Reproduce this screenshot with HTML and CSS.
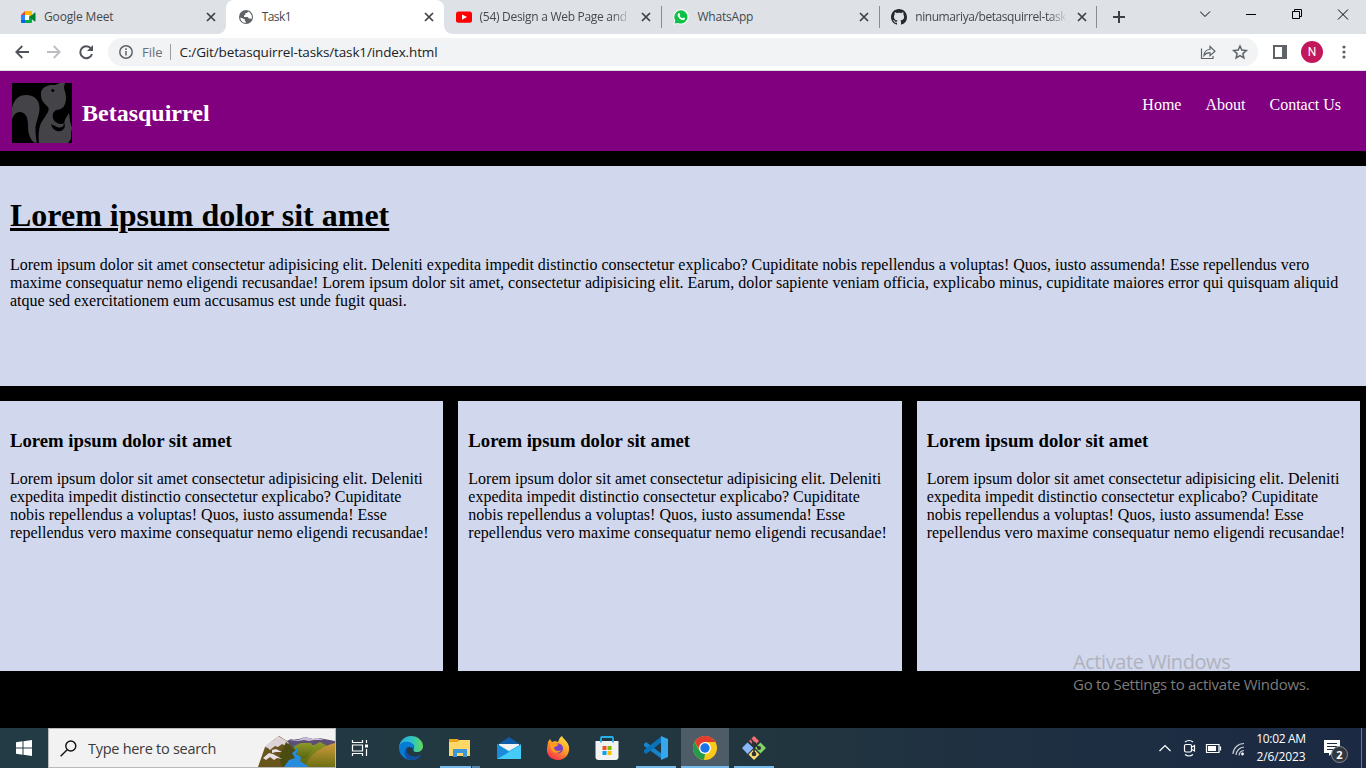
FILE: index.html
```html
<!DOCTYPE html>
<html lang="en">
<head>
<meta charset="utf-8">
<title>Task1</title>
<link rel="stylesheet" href="styles.css">
</head>
<body>
<svg class="defs" width="0" height="0">
  <symbol id="close" viewBox="0 0 10 10"><path d="M1 1l8 8M9 1L1 9" stroke="#3c4043" stroke-width="1.7" fill="none"/></symbol>
</svg>
<div class="screen">
  <div class="tabstrip">
    <div class="tab">
      <svg class="fav" viewBox="0 0 16 16"><path d="M1 6l4-4v4z" fill="#ea4335"/><path d="M5 2h6a1 1 0 0 1 1 1v3L9 8V6H5z" fill="#fbbc04"/><path d="M1 6h4v5H1z" fill="#2684fc"/><path d="M1 11h4v3H2a1 1 0 0 1-1-1z" fill="#0066da"/><path d="M5 6h4v5H5z" fill="#fff"/><path d="M5 11h4V8l3-2v7a1 1 0 0 1-1 1H5z" fill="#00ac47"/><path d="M12 6l2.500-2.300c.4-.3 1-.1 1 .4v7.800c0 .5-.6.7-1 .4L9 8z" fill="#00832d"/></svg>
      <span class="name meet">Google Meet</span><svg class="x"><use href="#close"/></svg>
    </div>
    <div class="tab active">
      <svg class="fav" viewBox="0 0 16 16"><circle cx="8" cy="8" r="7" fill="#5f6368"/><path d="M2.300 8.500l4.400 1.800v1.500l1 .8v1.300C4.600 13.900 2.300 11.500 2.300 8.500zM10 2.600L9.200 4H7.400v1.700L6 6.600v1.300h3.800l1 1.600h1.700l1 .8A5.800 5.800 0 0 0 10 2.600z" fill="#fff"/></svg>
      <span class="name task">Task1</span><svg class="x"><use href="#close"/></svg>
    </div>
    <div class="tab">
      <svg class="fav" viewBox="0 0 16 16"><rect y="2.500" width="16" height="11.300" rx="2.500" fill="#f00"/><path d="M6 5.500l5 2.600-5 2.600z" fill="#fff"/></svg>
      <span class="name tube fade">(54) Design a Web Page and U</span><svg class="x"><use href="#close"/></svg>
    </div>
    <div class="tab sep">
      <svg class="fav" viewBox="0 0 16 16"><path d="M.3 15.700L1.400 11.500A7.600 7.600 0 1 1 4.700 14.700z" fill="#fff"/><path d="M1.500 14.600L2.300 11.500A6.600 6.600 0 1 1 5 13.900z" fill="#0cc143"/><path d="M5.500 4.300c.5-.5 1-.3 1.200.2l.5 1.200c.1.400-.6.900-.6 1.100.5 1.300 1.400 2 2.600 2.500.4.100.7-.9 1.100-.9l1.500.7c.5.300 0 2-1.600 2.100C7.700 11.300 4.600 8.200 4.600 6c0-.7.300-1.300.9-1.700z" fill="#fff"/></svg>
      <span class="name wa">WhatsApp</span><svg class="x"><use href="#close"/></svg>
    </div>
    <div class="tab sep last">
      <svg class="fav" viewBox="0 0 16 16"><path fill="#24292f" d="M8 0C3.580 0 0 3.580 0 8c0 3.540 2.290 6.530 5.470 7.590.4.070.55-.17.55-.38 0-.19-.01-.82-.01-1.490-2.010.37-2.530-.49-2.690-.94-.09-.23-.48-.94-.82-1.130-.28-.15-.68-.52-.01-.53.63-.01 1.080.58 1.230.82.72 1.210 1.870.87 2.330.66.070-.52.28-.87.51-1.070-1.780-.2-3.640-.89-3.640-3.950 0-.87.31-1.590.82-2.150-.08-.2-.36-1.020.08-2.120 0 0 .67-.21 2.200.82.64-.18 1.320-.27 2-.27s1.360.09 2 .27c1.530-1.040 2.200-.82 2.200-.82.44 1.100.16 1.920.08 2.120.51.56.82 1.270.82 2.150 0 3.070-1.870 3.750-3.650 3.950.29.25.54.73.54 1.480 0 1.070-.01 1.930-.01 2.200 0 .21.15.46.55.38A8.010 8.010 0 0 0 16 8c0-4.420-3.580-8-8-8z"/></svg>
      <span class="name hub fade">ninumariya/betasquirrel-task</span><svg class="x"><use href="#close"/></svg>
    </div>
    <svg class="plus" viewBox="0 0 12 12"><path d="M6 0v12M0 6h12" stroke="#3c4043" stroke-width="2"/></svg>
    <svg class="winctl" width="166" height="34" viewBox="1200 0 166 34" fill="none" stroke="#000"><path d="M1200 11.500l5 5 5-5M1246 14.500h10M1292.500 11.500h7v7h-7zM1294.500 11V9.500h7v7H1300M1338 9.500l10 10M1348 9.500l-10 10"/></svg>
  </div>
  <div class="toolbar">
    <svg class="navicons" width="96" height="36" viewBox="0 34 96 36" fill="none" stroke-width="1.800"><path d="M29 52H16.500M22.300 46l-6 6 6 6" stroke="#50545a"/><path d="M47 52h12.500M53.700 46l6 6-6 6" stroke="#bbbdc0"/><path d="M91 48.500A6 6 0 1 0 92 54" stroke="#50545a" stroke-width="2"/><path d="M93 45v6h-6z" fill="#50545a"/></svg>
    <div class="omnibox">
      <svg width="16" height="16" viewBox="0 0 16 16" fill="none" stroke="#5f6368" stroke-width="1.500"><circle cx="8" cy="8" r="6.200"/><path d="M8 7v4.500M8 4.300v1.600"/></svg>
      <span class="scheme">File</span><i class="bar"></i><span class="url">C:/Git/betasquirrel-tasks/task1/index.html</span>
      <svg class="boxicons" width="50" height="18" viewBox="1200 43 50 18" fill="none" stroke="#5f6368"><path d="M1201.500 48.500v10h11.500V56M1204 55.500c.4-4.400 2.500-6 6-6v-3l5 4.700-5 4.500v-3c-3 0-4.500.8-6 2.800z" stroke-width="1.200"/><path d="M1240 46l1.800 4.100 4.500.5-3.400 3 1 4.400-3.900-2.300-3.900 2.300 1-4.400-3.400-3 4.500-.5z" stroke-width="1.500"/></svg>
    </div>
    <svg class="sidepanel" width="14" height="14" viewBox="0 0 14 14"><path fill="#5f6368" fill-rule="evenodd" d="M0 0h14v14H0zM2 2v10h7V2z"/></svg>
    <span class="avatar">N</span>
    <svg class="dots" width="4" height="14" viewBox="0 0 4 14" fill="#5f6368"><circle cx="2" cy="2" r="1.600"/><circle cx="2" cy="7" r="1.600"/><circle cx="2" cy="12" r="1.600"/></svg>
  </div>

  <main class="page">
    <header class="site">
      <svg class="logo" viewBox="0 0 60 60"><rect width="60" height="60" fill="#000"/><path d="M0 37V25C2 16 7 12 14 12c9 0 14 6 13.500 14C27 35 23 40 23.500 47c0 5 .5 9 1.500 12.500h-3C17 55 16 49 16 42c0-8-3-13-8-13-4 0-7 3-8 8z" fill="#444348"/><path d="M29 9C31 4 35 2 40 2h3l5-2h5l-1 4c0 3 2 6 2 11 0 7-3 12-10 12-3 2-4 5-3 8 1 4 5 6 9 6l1-1 1 2c-2 3-5 3-7 2l-6-3c1 4 3 6 6 7 4 1 7-1 8-5-2-5 1-8 4-13l1 8 2 7-1 6c1 4-1 7-3 9H27c-1-8 0-15 2-20l7-11c1-3 1-4-1-6-4-3-6-7-6-10z" fill="#444348"/><circle cx="40.800" cy="7.500" r="1.500"/></svg>
      <h2>Betasquirrel</h2>
      <nav><a>Home</a><a>About</a><a>Contact Us</a></nav>
    </header>
    <section class="hero">
      <h1>Lorem ipsum dolor sit amet</h1>
      <p>Lorem ipsum dolor sit amet consectetur adipisicing elit. Deleniti expedita impedit distinctio consectetur explicabo? Cupiditate nobis repellendus a voluptas! Quos, iusto assumenda! Esse repellendus vero<br>maxime consequatur nemo eligendi recusandae! Lorem ipsum dolor sit amet, consectetur adipisicing elit. Earum, dolor sapiente veniam officia, explicabo minus, cupiditate maiores error qui quisquam aliquid<br>atque sed exercitationem eum accusamus est unde fugit quasi.</p>
    </section>
    <div class="cards">
      <article><h3>Lorem ipsum dolor sit amet</h3><p>Lorem ipsum dolor sit amet consectetur adipisicing elit. Deleniti<br>expedita impedit distinctio consectetur explicabo? Cupiditate<br>nobis repellendus a voluptas! Quos, iusto assumenda! Esse<br>repellendus vero maxime consequatur nemo eligendi recusandae!</p></article>
      <article><h3>Lorem ipsum dolor sit amet</h3><p>Lorem ipsum dolor sit amet consectetur adipisicing elit. Deleniti<br>expedita impedit distinctio consectetur explicabo? Cupiditate<br>nobis repellendus a voluptas! Quos, iusto assumenda! Esse<br>repellendus vero maxime consequatur nemo eligendi recusandae!</p></article>
      <article><h3>Lorem ipsum dolor sit amet</h3><p>Lorem ipsum dolor sit amet consectetur adipisicing elit. Deleniti<br>expedita impedit distinctio consectetur explicabo? Cupiditate<br>nobis repellendus a voluptas! Quos, iusto assumenda! Esse<br>repellendus vero maxime consequatur nemo eligendi recusandae!</p></article>
    </div>
  </main>
  <div class="activate"><div class="act1"><span>Activate Windows</span></div><div class="act2"><span>Go to Settings to activate Windows.</span></div></div>

  <footer class="taskbar">
    <div class="start"><svg width="16" height="16" viewBox="0 0 16 16" fill="#fff"><path d="M0 2.300L6.500 1.300v6.200H0zM7.500 1.200L16 0v7.500H7.500zM0 8.500h6.500v6.200L0 13.800zM7.500 8.500H16V16l-8.500-1.200z"/></svg></div>
    <div class="search">
      <svg width="17" height="17" viewBox="0 0 17 17" fill="none" stroke="#111" stroke-width="1.400"><circle cx="10.800" cy="6" r="5"/><path d="M7.200 9.700L.6 16.300"/></svg>
      <span>Type here to search</span>
      <svg class="scene" width="77" height="33" viewBox="0 0 77 33">
        <defs>
          <linearGradient id="hill" x1="0" y1="0" x2="0" y2="1"><stop stop-color="#d09a3c"/><stop offset="1" stop-color="#6d7013"/></linearGradient>
          <linearGradient id="green" x1="0" y1="0" x2="0" y2="1"><stop stop-color="#8d9a26"/><stop offset="1" stop-color="#55600f"/></linearGradient>
        </defs>
        <path d="M27 8l6-3 8 0 6-2 8 2 6-1 16 3v9H30z" fill="#5c5077"/><path d="M31 6l5-1 4 1 7-3 7 2 6-1 6 2-5 0-5 0-5 1-5-1-6 1z" fill="#c9bdd3"/>
        <path d="M32 33l4-19 8-3 12 0 6-3 15 8v17z" fill="url(#green)"/><path d="M77 9v24H47c3-11 15-20 30-24z" fill="url(#hill)"/><path d="M36 12l7-3 10 0 3 5-8 10-9 2-4-8z" fill="url(#green)"/>
        <path d="M0 33L7 13l10-8 4-3 8 5 9 10 2 16z" fill="#67551c"/>
        <path d="M7 13l4-4 5-3 4-4 7 4 4 3-3 3-4-2-4 3-3-1-5 4-2-2z" fill="#ddd2d6"/>
        <path d="M28 8l10 9 2 8-4 8H24l-3-9z" fill="#4b4c10"/><path d="M5 24l6-5 4 1 9 5-5-1-3 2-4-3-4 3zM14 16l4-1 6 3-6 0-4 1z" fill="#e9e0e5"/>
        <path d="M36 11l4 5-2 4 5 3-1 4 9 6H26l5-7 6-2-3-5 4-3z" fill="#268ce0"/>
      </svg>
    </div>
    <div class="app view"><svg width="18" height="16" viewBox="0 0 18 16" fill="none" stroke="#fff" stroke-width="1.200"><path d="M1.500 0v2.500h10V0M1.500 5h10v6h-10zM1.500 16v-2.500h10V16M15.500 0v3M15.500 9v7"/><path d="M14 4.500h3v3h-3z" fill="#fff" stroke="none"/></svg></div>
    <div class="app edge"><svg width="24" height="24" viewBox="0 0 24 24"><defs><linearGradient id="eg" x1="0" x2="1"><stop stop-color="#2ba5df"/><stop offset=".55" stop-color="#2fc5c4"/><stop offset="1" stop-color="#62d957"/></linearGradient></defs><path d="M0 11C1 4 6 0 12 0c7 0 12 5 12 10 0 4-3 6-6 6-4 0-4-2-3-4 1-3-2-5-5-5-4 0-8 1-10 4z" fill="url(#eg)"/><path d="M0 10c2-4 6-5 10-4 4 1 6 4 4 7-1-3-7-3-7 2 0 5 5 8 10 7 2 0 3-1 5-3-2 3-5 5-10 5C5 24 0 18 0 12z" fill="#087bd5"/><path d="M9 10c-3 4-1 9 4 10 4 1 7 0 9-2-2 4-5 6-10 6-6 0-9-9-3-14z" fill="#124f9e"/></svg></div>
    <div class="app folder"><svg width="22" height="20" viewBox="0 0 22 20"><path d="M0 1h9l1 2h11v15H0z" fill="#e8a51d"/><path d="M0 4h9l1-2h11v16H0z" fill="#ffd767"/><path d="M4 11h14v8h-4v-4H8v4H4z" fill="#3b96dc"/></svg></div>
    <div class="app"><svg width="24" height="24" viewBox="0 0 24 24"><path d="M0 9L12 1l12 8v5H0z" fill="#0f5ca8"/><path d="M2 8h20v10H2z" fill="#f1f2f4"/><path d="M0 8l12 7 12-7v15H0z" fill="#2faced"/><path d="M0 23l24-14v14z" fill="#45cbf7"/><path d="M0 8l12 8L0 23z" fill="#198bd9"/></svg></div>
    <div class="app"><svg width="24" height="24" viewBox="0 0 24 24"><defs><linearGradient id="fg" y1="0" y2="1" x1=".8" x2=".2"><stop stop-color="#ffe447"/><stop offset=".5" stop-color="#ff9525"/><stop offset="1" stop-color="#f72756"/></linearGradient></defs><path d="M2 6l2-3 2 3 3-1 3 1c1-3 2-5 4-6 1 3 6 5 7 11 1 7-4 13-11 13C5 24 0 19 1 12z" fill="url(#fg)"/><circle cx="12" cy="12.500" r="5" fill="#7941c9"/><path d="M4 8c2-2 6-1 9 1-2 0-2 2-5 2 0 4 4 5 7 3-2 4-8 4-10-1z" fill="#ff9c19"/></svg></div>
    <div class="app"><svg width="24" height="24" viewBox="0 0 24 24"><path d="M6 7V2q0-1 1-1h10q1 0 1 1v5" fill="none" stroke="#25b2ea" stroke-width="1.800"/><path d="M.5 5h23v16q0 3-3 3h-17q-3 0-3-3z" fill="#f2f2f2"/><path d="M7.500 10h4v4h-4z" fill="#f25022"/><path d="M12.500 10h4v4h-4z" fill="#7fba00"/><path d="M7.500 15h4v4h-4z" fill="#00a4ef"/><path d="M12.500 15h4v4h-4z" fill="#ffb900"/><path d="M6 6.500V4.500M18 6.500V4.500" stroke="#25b2ea" stroke-width="1.800"/></svg></div>
    <div class="app code"><svg width="24" height="24" viewBox="0 0 24 24"><path d="M0 8l2-2 16 12v5L0 10z" fill="#1684ce"/><path d="M0 16l2 2L18 6V0L0 14z" fill="#0872ba"/><path d="M17 0l7 3v18l-7 3z" fill="#35a7ef"/></svg></div>
    <div class="app chrome"><svg width="24" height="24" viewBox="0 0 24 24"><circle cx="12" cy="12" r="12" fill="#fbc917"/><path d="M1.600 6A12 12 0 0 1 22.400 6H12L7 14z" fill="#e33b2e"/><path d="M1.600 6l5.200 9L12 18l-1 6A12 12 0 0 1 1.600 6z" fill="#229b4c"/><circle cx="12" cy="12" r="6" fill="#fff"/><circle cx="12" cy="12" r="4.700" fill="#1a73e8"/></svg></div>
    <div class="app git"><svg width="24" height="24" viewBox="0 0 24 24"><path d="M12 0l5 5-5 5-5-5z" fill="#f36f76"/><path d="M5.500 6.500l6 5.500-6 6L0 12z" fill="#8ab7fa"/><path d="M18.500 6.500L24 12l-5.500 5.500L13 12z" fill="#81d663"/><path d="M12 13l5.500 5.500L12 24l-5.500-5.500z" fill="#f8dc72"/><path d="M9 3l3 4v11M12 8l5 4" stroke="#302e35" stroke-width="1.600" fill="none"/><circle cx="12" cy="8" r="2.300" fill="#302e35"/><circle cx="17" cy="12" r="2" fill="#302e35"/><circle cx="12" cy="18" r="2.300" fill="#302e35"/></svg></div>
    <div class="tray">
      <svg width="88" height="24" viewBox="1158 736 88 24" fill="none" stroke="#fff" stroke-width="1.200"><path d="M1159.500 751l5.500-5.500 5.500 5.500"/><rect x="1184.500" y="744.500" width="7" height="7.500" rx="1.500"/><path d="M1192 747l2.500-1.500v5.500l-2.500-1.500M1185 742q4-3 8 0M1185 754.500q4 3 8 0"/><path d="M1206.500 744.500h12.500v8h-12.500zM1220.500 746.500v4"/><path d="M1208 746h8v5h-8z" fill="#fff" stroke="none"/><path d="M1233 754A11 11 0 0 1 1244 743.500M1236 755A8.500 8.500 0 0 1 1244 747M1239 755.500A5.500 5.500 0 0 1 1244 750.500" stroke="#c5cbd2"/><circle cx="1242.500" cy="754" r="1.400" fill="#fff" stroke="none"/></svg>
      <div class="clock"><span class="time">10:02 AM</span><span class="date">2/6/2023</span></div>
      <div class="notif"><svg width="17" height="17" viewBox="0 0 17 17"><path d="M0 0h16v13H8l-3 3v-3H0z" fill="#fff"/><path d="M3 3.500h10M3 6.500h10M3 9.500h6" stroke="#1c2b42"/></svg><b>2</b></div>
      <i class="peek"></i>
    </div>
  </footer>
</div>
</body>
</html>
```
FILE: styles.css
```css
* { box-sizing: border-box; }
body { margin: 0; background: #000; overflow: hidden; }
svg { display: block; flex: none; }
.defs { position: absolute; }
.screen { width: 1366px; height: 768px; display: flex; flex-direction: column; position: relative; font-family: "Open Sans", sans-serif; }

.tabstrip { height: 34px; background: #dee1e6; display: flex; align-items: center; padding-left: 8px; flex: none; }
.tab { width: 217.800px; height: 34px; display: flex; align-items: center; padding: 0 10px 0 12px; color: #45494d; font-size: 12px; position: relative; flex: none; }
.active { background: #fff; border-radius: 8px 8px 0 0; }
.active::before, .active::after { content: ""; position: absolute; bottom: 0; width: 8px; height: 8px; }
.active::before { left: -8px; background: radial-gradient(circle at 0 0, transparent 7.500px, #fff 8px); }
.active::after { right: -8px; background: radial-gradient(circle at 100% 0, transparent 7.500px, #fff 8px); }
.sep { border-left: 1px solid transparent; border-image: linear-gradient(transparent 7px, #888b90 7px, #888b90 27px, transparent 27px) 1; padding-left: 11px; }
.last { border-right: 1px solid transparent; padding-right: 9px; }
.fav { width: 16px; height: 16px; margin-right: 8px; }
.name { flex: 1; white-space: nowrap; line-height: 18px; }
.meet { letter-spacing: -.15px; }
.task { letter-spacing: -.6px; }
.tube { letter-spacing: -.29px; }
.hub { letter-spacing: -.42px; }
.wa { letter-spacing: -.2px; }
.x { width: 10px; height: 10px; }
.fade { min-width: 0; margin-right: 9px; -webkit-mask-image: linear-gradient(to right, #000 calc(100% - 20px), transparent calc(100% - 1px)); mask-image: linear-gradient(to right, #000 calc(100% - 20px), transparent calc(100% - 1px)); }
.plus { width: 12px; height: 12px; margin-left: 16px; }
.winctl { margin-left: auto; }

.toolbar { height: 37px; background: #fff; display: flex; align-items: center; padding-bottom: 1px; border-bottom: 1px solid #dadce0; flex: none; }
.omnibox { width: 1150px; height: 28px; margin-left: 12px; padding: 0 8px 0 10px; border-radius: 14px; background: #f1f3f4; display: flex; align-items: center; font-size: 14px; }
.scheme { margin-left: 8px; color: #6a6e73; font-size: 13px; }
.bar { width: 1px; height: 16px; background: #9a9da1; margin: 0 9px 0 7px; }
.url { color: #202124; white-space: nowrap; font-size: 13.500px; letter-spacing: -.14px; }
.boxicons { margin-left: auto; }
.sidepanel { margin-left: 15px; }
.avatar { width: 22px; height: 22px; margin-left: 14px; border-radius: 50%; background: #c2185b; color: #fff; font: 12px/22px Roboto, sans-serif; text-align: center; }
.dots { margin-left: 19px; }

.page { font-family: "Liberation Serif", serif; font-size: 16px; line-height: 18px; color: #000; flex: 1; }
.page p { margin: 0; white-space: nowrap; }
.site { height: 80px; background: #800080; display: flex; padding: 12px 25px 0 12px; color: #fff; }
.logo { width: 60px; height: 60px; }
.site h2 { font-size: 24px; line-height: 27px; margin: 17px 0 0 10px; }
.site nav { margin-left: auto; display: flex; gap: 24px; padding-top: 13px; }
.hero { height: 220px; margin-top: 15px; padding: 31px 10px 0; background: #d1d7ed; }
.hero h1 { margin: 0 0 22px; font-size: 32px; line-height: 37px; text-decoration: underline; }
.cards { margin-top: 15px; display: flex; gap: 15px; padding-right: 6px; }
.cards article { flex: 1; min-width: 0; height: 270px; padding: 29px 10px 0; background: #d1d7ed; }
.cards h3 { margin: 0 0 19px; font-size: 18.720px; line-height: 21px; white-space: nowrap; }

.activate { position: absolute; left: 1073px; top: 649px; white-space: nowrap; }
.act1 { font-size: 20px; line-height: 26px; color: #b0b3bd; letter-spacing: -.43px; }
.act2 { font-size: 15px; line-height: 19px; color: #7c7c7c; letter-spacing: -.27px; }

.taskbar { height: 40px; display: flex; align-items: center; background: linear-gradient(90deg, #233b45, #22363f 55%, #1d2e42 80%, #1c2943); color: #fff; flex: none; }
.start { width: 48px; display: flex; justify-content: center; }
.search { width: 288px; height: 40px; background: #f2f2f2; border: 1px solid #b9b9b9; display: flex; align-items: center; padding-left: 11px; color: #3a3a3a; font-size: 14.500px; letter-spacing: -.28px; white-space: nowrap; }
.search span { margin-left: 11px; }
.scene { margin-left: auto; align-self: flex-end; }
.app { width: 49px; height: 40px; display: flex; align-items: center; justify-content: center; flex: none; position: relative; }
.view { width: 50px; padding-right: 2px; }
.folder::after, .code::after, .chrome::after, .git::after { content: ""; position: absolute; bottom: 0; left: 5px; width: 40px; height: 2px; background: #76b9ed; }
.folder::after { background: linear-gradient(90deg, #76b9ed 31px, #22363f 31px, #22363f 32px, #5487ab 32px); }
.chrome { background: linear-gradient(90deg, transparent 1px, #4d5c66 1px); }
.chrome::after { left: 1px; width: 48px; }
.tray { margin-left: auto; display: flex; align-items: center; height: 40px; }
.clock { width: 70px; display: flex; flex-direction: column; align-items: center; font-size: 12px; line-height: 18px; letter-spacing: -.35px; padding-bottom: 1px; white-space: nowrap; }
.date { letter-spacing: -.1px; }
.notif { width: 25px; height: 17px; margin-left: 8px; position: relative; }
.notif b { position: absolute; left: 7px; top: 6px; width: 17px; height: 17px; border-radius: 50%; border: 1px solid #878c94; background: #32363f; font-size: 11px; line-height: 15px; text-align: center; }
.peek { width: 1px; height: 40px; background: #6d7887; margin: 0 4px 0 12px; }
```
